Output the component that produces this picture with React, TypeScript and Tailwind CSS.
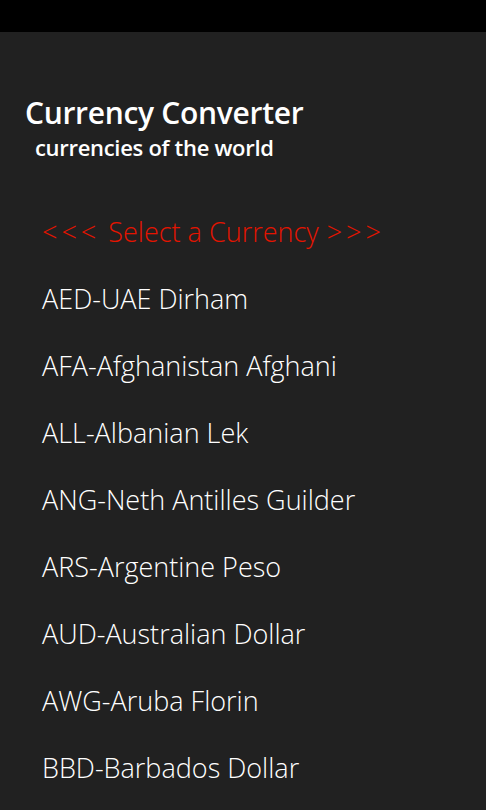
const currencies = [
  "AED-UAE Dirham",
  "AFA-Afghanistan Afghani",
  "ALL-Albanian Lek",
  "ANG-Neth Antilles Guilder",
  "ARS-Argentine Peso",
  "AUD-Australian Dollar",
  "AWG-Aruba Florin",
  "BBD-Barbados Dollar",
];

export default function App() {
  return (
    <div
      className="h-[810px] w-[486px] overflow-hidden bg-[#212121] text-white"
      style={{ fontFamily: '"Open Sans", "Noto Sans", sans-serif' }}
    >
      <div className="h-8 bg-black" />

      <div className="pl-[25px] pt-[62px]">
        <h1 className="text-[30px] font-semibold leading-[38px] tracking-[-0.3px]">Currency Converter</h1>
        <p className="pl-[10px] pt-[1px] text-[22px] font-semibold leading-[28px] tracking-[-0.3px]">currencies of the world</p>
      </div>

      <ul className="mt-[53px] pl-[42px]">
        <li className="flex h-[67px] items-start gap-[8px] text-[27px] font-light leading-[36px] text-[#e51400]">
          <span className="tracking-[4px]">&lt;&lt;&lt;</span>
          <span>Select a Currency</span>
          <span className="tracking-[4px]">&gt;&gt;&gt;</span>
        </li>
        {currencies.map((c) => (
          <li key={c} className="flex h-[67px] items-start text-[27px] font-light leading-[36px]">
            {c}
          </li>
        ))}
      </ul>
    </div>
  );
}
